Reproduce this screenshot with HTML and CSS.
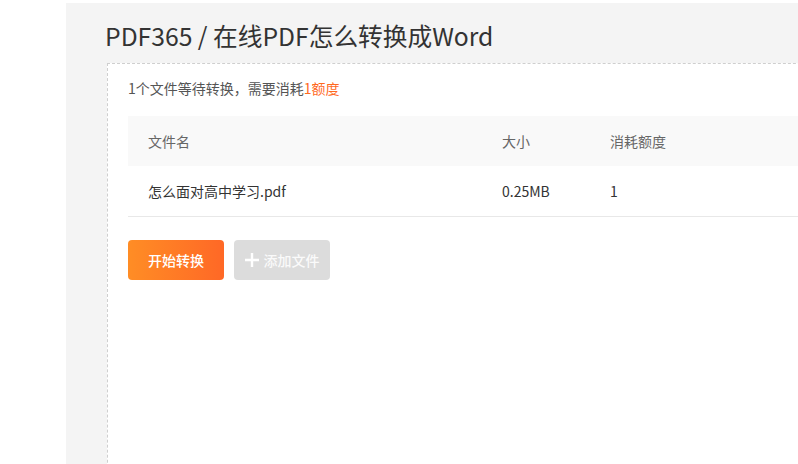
FILE: index.html
```html
<!DOCTYPE html>
<html lang="zh-CN">
<head>
<meta charset="utf-8">
<title>PDF365</title>
<link rel="stylesheet" href="styles.css">
</head>
<body>
<main class="page">
  <h1 class="title">PDF365 / 在线PDF怎么转换成Word</h1>
  <section class="card">
    <p class="info">1个文件等待转换，需要消耗<span class="hl">1额度</span></p>
    <div class="table">
      <div class="row head">
        <div>文件名</div>
        <div>大小</div>
        <div>消耗额度</div>
      </div>
      <div class="row body">
        <div>怎么面对高中学习.pdf</div>
        <div>0.25MB</div>
        <div>1</div>
      </div>
    </div>
    <div class="actions">
      <button class="btn primary">开始转换</button>
      <button class="btn disabled"><svg class="plus" viewBox="0 0 14 14" width="14" height="14"><path d="M7 0v14M0 7h14" stroke="#fff" stroke-width="2.4"/></svg>添加文件</button>
    </div>
  </section>
</main>
</body>
</html>
```
FILE: styles.css
```css
html, body {
  margin: 0;
  padding: 0;
  background: #fff;
  overflow: hidden;
  height: 100%;
}
body {
  font-family: "Noto Sans CJK SC", "Noto Sans", sans-serif;
}
.page {
  margin: 3px 0 0 66px;
  background: #f4f4f4;
  height: 520px;
  padding: 0 0 0 41px;
  box-sizing: border-box;
  display: flex;
  flex-direction: column;
  width: 800px;
}
.title {
  margin: 0 0 0 -2px;
  padding: 14px 0 0 0;
  height: 46px;
  font-size: 24.7px;
  line-height: 36px;
  font-weight: 400;
  color: #333;
  white-space: nowrap;
}
.card {
  flex: 1;
  background: #fff;
  border: 1px dashed #cfcfcf;
  border-right: none;
  padding: 0 0 0 20px;
}
.info {
  margin: 14px 0 0;
  font-size: 14px;
  line-height: 20px;
  color: #555;
}
.hl { color: #ff6a1f; }
.table {
  margin-top: 18px;
}
.row {
  display: grid;
  grid-template-columns: 354px 108px 1fr;
  padding-left: 20px;
  height: 50px;
  align-items: center;
  font-size: 14px;
}
.row.head {
  background: #f9f9f9;
  color: #666;
}
.row.body {
  color: #333;
  border-bottom: 1px solid #e8e8e8;
}
.actions {
  display: flex;
  gap: 10px;
  margin-top: 23px;
}
.btn {
  width: 96px;
  height: 40px;
  border: none;
  border-radius: 4px;
  font-family: inherit;
  font-size: 14px;
  color: #fff;
  display: flex;
  align-items: center;
  justify-content: center;
  padding: 0;
}
.btn.primary {
  background: linear-gradient(90deg, #ff8d25 0%, #ff6826 100%);
  font-weight: 500;
}
.btn.disabled {
  background: #dcdcdc;
  color: #fafafa;
  font-weight: 500;
}
.plus {
  margin-right: 5px;
}
```
